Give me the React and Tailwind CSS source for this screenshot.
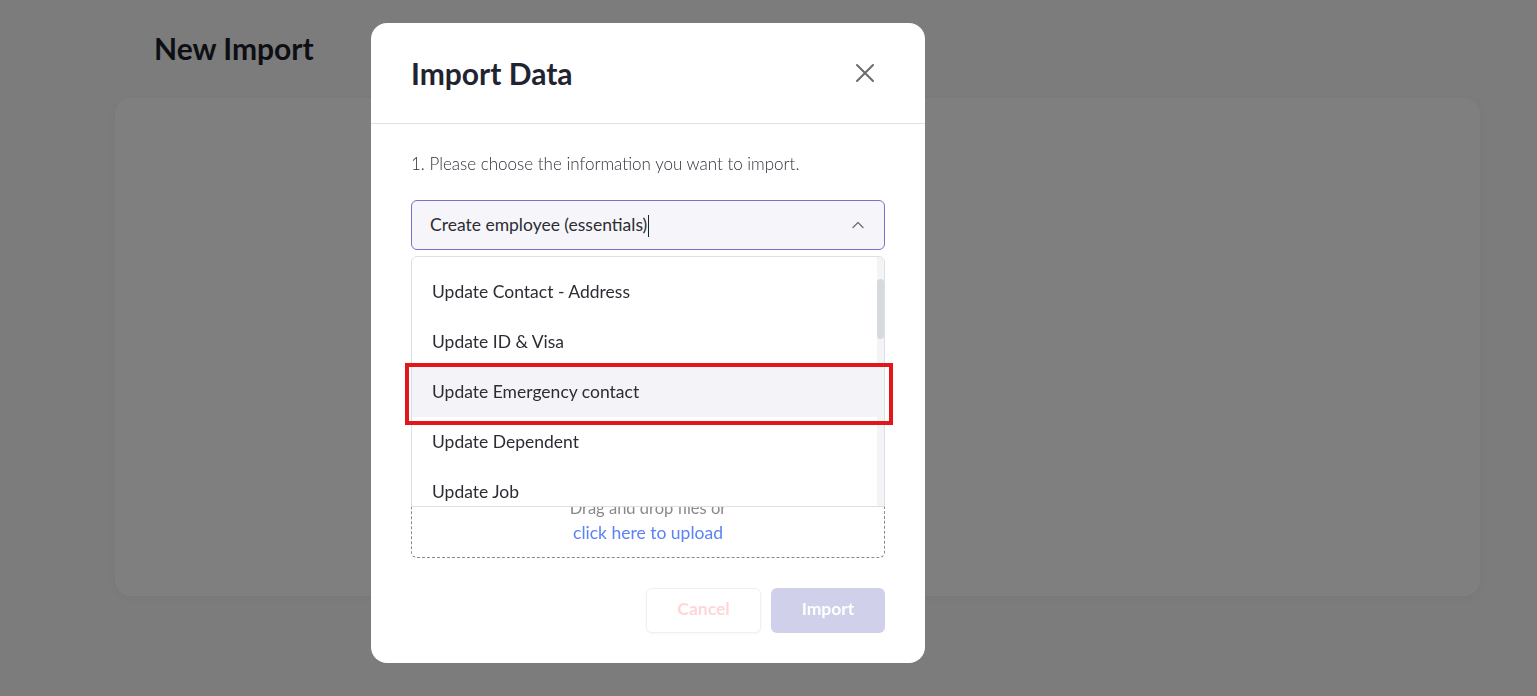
import React from 'react';

const options = [
  'Create employee (essentials)',
  'Update Contact - Address',
  'Update ID & Visa',
  'Update Emergency contact',
  'Update Dependent',
  'Update Job',
];

function CloseIcon() {
  return (
    <svg width="20" height="20" viewBox="0 0 20 20" fill="none" stroke="#6b6b6b" strokeWidth="2" strokeLinecap="round">
      <path d="M2 2 18 18M18 2 2 18" />
    </svg>
  );
}

function ChevronUp() {
  return (
    <svg width="12" height="8" viewBox="0 0 12 8" fill="none" stroke="#6f6f78" strokeWidth="1.3" strokeLinecap="round" strokeLinejoin="round">
      <path d="M1 6.5 6 1.5l5 5" />
    </svg>
  );
}

function OptionList() {
  return (
    <div className="absolute left-0 right-0 top-[56px] h-[251px] bg-white border border-[#dcdfe5] rounded-t-md overflow-hidden z-10">
      <div className="-mt-[40px]">
        {options.map((opt) => (
          <div
            key={opt}
            className={`h-[50px] flex items-center pl-5 text-[17.5px] text-[#2b2d33] ${
              opt === 'Update Emergency contact' ? 'bg-[#f3f3f8]' : ''
            }`}
          >
            {opt}
          </div>
        ))}
      </div>
      {/* scrollbar */}
      <div className="absolute top-0 right-0 bottom-0 w-[7px] bg-[#f3f4f6]">
        <div className="mt-[22px] h-[60px] rounded-full bg-[#d6d9de]" />
      </div>
    </div>
  );
}

function ImportModal() {
  return (
    <div className="w-[554px] h-[640px] bg-white rounded-2xl flex flex-col">
      <div className="h-[101px] flex items-center justify-between pl-10 pr-[50px] border-b border-[#dde1e8]">
        <h2 className="text-[30px] font-bold text-[#1f2430]">Import Data</h2>
        <button className="p-0">
          <CloseIcon />
        </button>
      </div>

      <div className="flex-1 flex flex-col px-10 pt-[30px] pb-[30px]">
        <p className="text-[17px] leading-5 font-light text-[#2f323a]">
          1. Please choose the information you want to import.
        </p>

        <div className="relative mt-[26px]">
          <div className="h-[50px] flex items-center justify-between pl-[18px] pr-[20px] rounded-md border border-[#7572c9] bg-[#f6f6fa]">
            <span className="text-[17.5px] text-[#2b2d33] pt-px">
              Create employee (essentials)
              <span className="inline-block w-px h-[22px] bg-[#222] align-middle ml-px -mt-[2px]" />
            </span>
            <ChevronUp />
          </div>

          <OptionList />

          {/* annotation */}
          <div className="absolute left-[-6px] right-[-8px] top-[163px] h-[62px] border-4 border-[#e3161b] z-20 pointer-events-none" />
        </div>

        <p className="mt-[26px] text-[17px] leading-5 font-light text-[#2f323a]">2. Upload your file</p>

        <div className="mt-[16px] h-[246px] rounded-md border border-dashed border-[#8a8a8a] flex flex-col items-center justify-end pb-[12px]">
          <div className="text-[16.5px] leading-[26px] text-[#8a8a8a]">Drag and drop files or</div>
          <div className="text-[17.5px] leading-[24px] text-[#5b83f4]">click here to upload</div>
        </div>

        <div className="mt-auto flex justify-end gap-[10px]">
          <button className="w-[115px] h-[45px] rounded-md border border-[#f0f0f2] bg-white shadow-[0_1px_3px_rgba(0,0,0,0.04)] text-[17.5px] font-bold text-[#ffd6d8] pb-[3px]">
            Cancel
          </button>
          <button className="w-[114px] h-[45px] rounded-md bg-[#d0d0ea] text-[17.5px] font-bold text-white pb-[3px]">
            Import
          </button>
        </div>
      </div>
    </div>
  );
}

export default function App() {
  return (
    <div className="relative min-h-screen h-[696px] overflow-hidden bg-[#f8f8fa]" style={{ fontFamily: 'Lato, "Noto Sans", sans-serif' }}>
      <div className="pl-[154px] pr-[57px] pt-[26px]">
        <h1 className="text-[30px] font-bold text-[#1b1f2a]">New Import</h1>
      </div>
      <div className="ml-[115px] mr-[57px] mt-[27px] h-[498px] bg-white rounded-2xl shadow-[0_2px_10px_rgba(0,0,0,0.04)]" />

      <div className="fixed inset-0 bg-black/50 flex items-start pl-[371px] pt-[23px]">
        <ImportModal />
      </div>
    </div>
  );
}
